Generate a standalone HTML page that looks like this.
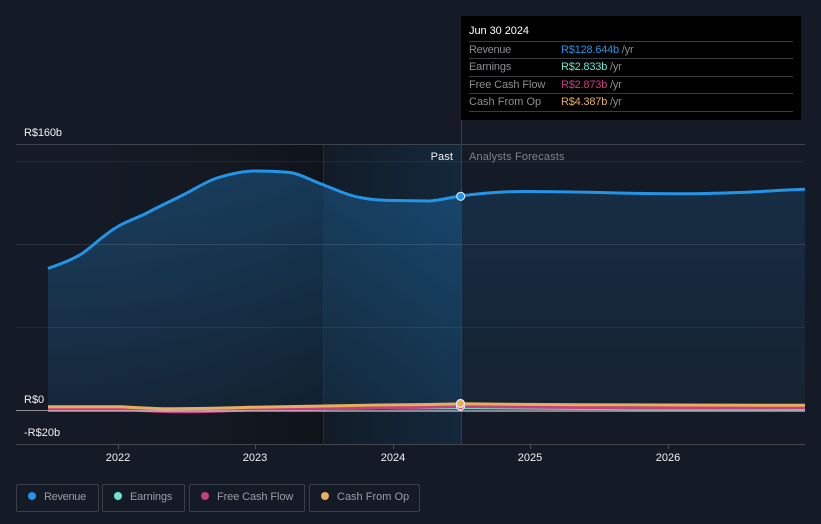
<!DOCTYPE html>
<html><head><meta charset="utf-8">
<style>
html,body{margin:0;padding:0;background:#151b26;width:821px;height:524px;overflow:hidden}
body{font-family:"Liberation Sans",sans-serif;position:relative}
svg{position:absolute;left:0;top:0}
svg text{font-family:"Liberation Sans",sans-serif}
.tip{position:absolute;left:461px;top:16px;width:340px;height:104px;background:#000}
.tip .d{position:absolute;left:8px;top:8px;font-size:11px;color:#fff;line-height:14px;letter-spacing:-.05px}
.tip .l{position:absolute;left:8px;width:324px;height:1px;background:#3a3c40}
.tip .n,.tip .v{position:absolute;font-size:11px;line-height:14px;white-space:nowrap}
.tip .n{left:8px;color:#8b8d91}
.tip .v{left:100px;color:#8b8d91;letter-spacing:-.2px}
.lg{position:absolute;top:484px;height:26px;border:1px solid #3b3f48;border-radius:2px;box-sizing:content-box;font-size:11px;color:#9a9da3;line-height:24px}
.lg i{position:absolute;left:11px;top:7px;width:8px;height:8px;border-radius:50%}
.lg span{position:absolute;left:27px;top:0;white-space:nowrap}
</style></head>
<body>
<svg width="821" height="524" viewBox="0 0 821 524">
<defs>
<linearGradient id="dk" x1="0" x2="1" y1="0" y2="0"><stop offset="0" stop-color="#151b26" stop-opacity="0"/><stop offset="1" stop-color="#10131a"/></linearGradient>
<linearGradient id="bl" x1="0" x2="1" y1="0" y2="0"><stop offset="0" stop-color="#121c27"/><stop offset="1" stop-color="#13283c"/></linearGradient>
<linearGradient id="a1" gradientUnits="userSpaceOnUse" x1="0" x2="0" y1="171" y2="410"><stop offset="0" stop-color="#2394e6" stop-opacity=".3"/><stop offset="1" stop-color="#2394e6" stop-opacity=".1"/></linearGradient>
<linearGradient id="a2" gradientUnits="userSpaceOnUse" x1="0" x2="0" y1="190" y2="410"><stop offset="0" stop-color="#2394e6" stop-opacity=".15"/><stop offset="1" stop-color="#2394e6" stop-opacity=".06"/></linearGradient>
</defs>
<rect x="48" y="144" width="275" height="300" fill="url(#dk)"/>
<rect x="323" y="144" width="138" height="300" fill="url(#bl)"/>
<path d="M48 268.5C60 264 72 260 83 253C95 244 105 234 117 227C127 221 137 218 147 213C160 206 171 201 183 195C195 189 205 182 217 178C230 174 242 171 255 171C268 171 280 171.500 290 172.500C301 174 310 180 320 183.500C334 189 347 195 360 197.500C372 200 384 200.500 395 200.500L430 201C440 200 450 197.500 461 196L461 410L48 410Z" fill="url(#a1)"/>
<path d="M461 196C482 193 505 191.500 525 191.500C550 191.500 575 192 600 192.500C630 193.500 655 193.800 680 193.800C700 193.800 720 193.200 740 192.500C762 191.500 785 190 805 189.300L805 410L461 410Z" fill="url(#a2)"/>
<g fill="none">
<path d="M16 144.500H805" stroke="#3f434b"/>
<path d="M16 161.500H805" stroke="#fff" stroke-opacity=".07"/>
<path d="M16 244.500H805" stroke="#fff" stroke-opacity=".11"/>
<path d="M16 327.500H805" stroke="#fff" stroke-opacity=".07"/>
<path d="M16 444.500H805" stroke="#44474e"/>
<path d="M323.500 144V444" stroke="#24384a" stroke-opacity=".8"/>
<path d="M461.500 120V444" stroke="#24425a"/>
<path d="M118.500 444V449M255.500 444V449M393.500 444V449M530.500 444V449M668.500 444V449" stroke="#4a4d54"/>
</g>
<path d="M16 410.500H48" stroke="#8d9094"/>
<g fill="none" stroke-linecap="butt">
<path d="M48 410C80 410 110 410 130 409.500C150 409 180 408.500 210 408.500C260 408.500 320 408.500 380 408.300C410 408 440 408 461 408C500 408.500 560 408.800 640 409C700 409 760 409 805 409" stroke="#6fe3d1" stroke-width="2.500"/>
<path d="M48 409.300C80 409.300 110 409 125 409.300C140 410.500 165 411.800 190 411.800C215 411.500 240 410 270 409.500C320 409 400 408 461 406.500C500 407 560 407.500 640 408C700 408 760 408 805 407.800" stroke="#c6407f" stroke-width="3"/>
<path d="M48 406.800C80 407 105 406.800 120 406.800C135 407.300 150 408.600 170 408.800C190 408.800 220 408.300 250 407.300C300 406.300 340 405.500 380 405C410 404.800 440 404.500 461 403.800C490 404 530 404.500 580 404.800C640 405 720 405.300 805 405.300" stroke="#e9ae5b" stroke-width="3"/>
</g>
<path d="M48 411H805" stroke="#c8cacc" stroke-width="1.300"/>
<path d="M48 268.500C60 264 72 260 83 253C95 244 105 234 117 227C127 221 137 218 147 213C160 206 171 201 183 195C195 189 205 182 217 178C230 174 242 171 255 171C268 171 280 171.500 290 172.500C301 174 310 180 320 183.500C334 189 347 195 360 197.500C372 200 384 200.500 395 200.500L430 201C440 200 450 197.500 461 196C482 193 505 191.500 525 191.500C550 191.500 575 192 600 192.500C630 193.500 655 193.800 680 193.800C700 193.800 720 193.200 740 192.500C762 191.500 785 190 805 189.300" fill="none" stroke="#2394e6" stroke-width="3"/>
<circle cx="460.700" cy="196.300" r="4" fill="#2394e6" stroke="#d5e6f2" stroke-width="1.200"/>
<circle cx="460.500" cy="406" r="4" fill="#c6407f" stroke="#e8eef2" stroke-width="1.200"/>
<circle cx="460.500" cy="403.500" r="4" fill="#e9ae5b" stroke="#e8eef2" stroke-width="1.200"/>
<g font-size="11" fill="#f0f1f2">
<text x="24" y="136" letter-spacing="-.1">R$160b</text>
<text x="24" y="403">R$0</text>
<text x="24" y="436">-R$20b</text>
<text x="118" y="461" text-anchor="middle">2022</text>
<text x="255" y="461" text-anchor="middle">2023</text>
<text x="393" y="461" text-anchor="middle">2024</text>
<text x="530" y="461" text-anchor="middle">2025</text>
<text x="668" y="461" text-anchor="middle">2026</text>
<text x="453" y="160" text-anchor="end" letter-spacing=".1">Past</text>
<text x="469" y="160" fill="#7f8288" letter-spacing=".15">Analysts Forecasts</text>
</g>
</svg>
<div class="tip">
<div class="d">Jun 30 2024</div>
<div class="l" style="top:25px"></div>
<div class="n" style="top:27px;letter-spacing:-.3px">Revenue</div><div class="v" style="top:27px"><span style="color:#2394e6">R$128.644b</span> /yr</div>
<div class="l" style="top:42px"></div>
<div class="n" style="top:44px;letter-spacing:-.15px">Earnings</div><div class="v" style="top:44px"><span style="color:#6fe3d1">R$2.833b</span> /yr</div>
<div class="l" style="top:60px"></div>
<div class="n" style="top:62px;letter-spacing:-.1px">Free Cash Flow</div><div class="v" style="top:62px"><span style="color:#c6407f">R$2.873b</span> /yr</div>
<div class="l" style="top:77px"></div>
<div class="n" style="top:79px">Cash From Op</div><div class="v" style="top:79px"><span style="color:#e9ae5b">R$4.387b</span> /yr</div>
<div class="l" style="top:95px"></div>
</div>
<div class="lg" style="left:16px;width:81px"><i style="background:#2394e6"></i><span style="letter-spacing:-.3px">Revenue</span></div>
<div class="lg" style="left:102px;width:81px"><i style="background:#6fe3d1"></i><span style="letter-spacing:-.15px">Earnings</span></div>
<div class="lg" style="left:189px;width:114px"><i style="background:#c6407f"></i><span style="letter-spacing:-.1px">Free Cash Flow</span></div>
<div class="lg" style="left:309px;width:109px"><i style="background:#e9ae5b"></i><span>Cash From Op</span></div>
</body></html>
